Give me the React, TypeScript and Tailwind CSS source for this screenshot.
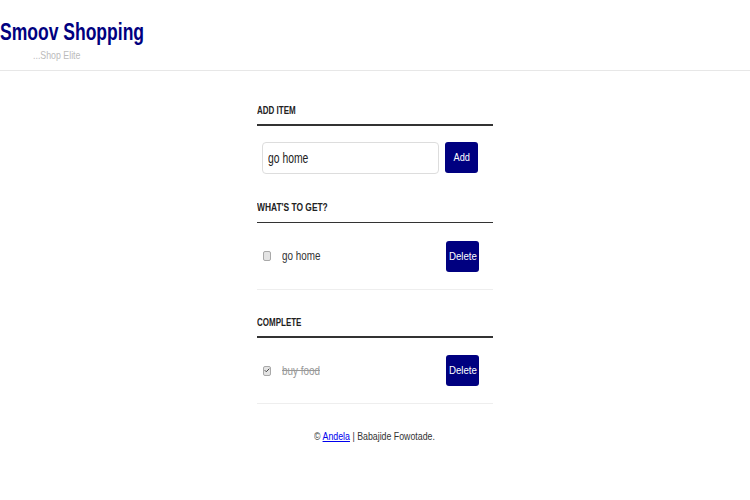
import { Check } from "lucide-react";
import type { ReactNode } from "react";

const font = { fontFamily: '"Liberation Sans", Arial, sans-serif' };

// the original renders a condensed helvetica, squeeze liberation to match
const N = ({ children, s = "scale-x-[0.8]", c = "origin-left" }: { children: ReactNode; s?: string; c?: string }) => (
  <span className={"inline-block whitespace-nowrap " + s + " " + c}>{children}</span>
);

const Box = ({ checked }: { checked?: boolean }) => (
  <span className="w-[8px] h-[10px] rounded-[2px] border border-[#a9a9a9] bg-[#e4e4e4] flex items-center justify-center">
    {checked && <Check size={7} strokeWidth={4} className="text-[#444]" />}
  </span>
);

const Row = ({ text, done, h }: { text: string; done?: boolean; h: string }) => (
  <div className={"flex items-center border-b border-[#eee] pl-[6px] pr-[14px] " + h}>
    <Box checked={done} />
    <span className={"ml-[11px] text-[13px] flex-1 " + (done ? "text-[#999]" : "text-[#333]")}>
      <N s={"scale-x-[0.76] " + (done ? "line-through" : "")}>{text}</N>
    </span>
    <button className="bg-[#000080] text-white text-[11px] rounded-[3px] w-[33px] h-[31px]">
      <N s="scale-x-[0.88]" c="origin-center">Delete</N>
    </button>
  </div>
);

export default function App() {
  return (
    <div className="w-[750px] h-[500px] bg-white text-[#333]" style={font}>
      <header className="h-[71px] border-b border-[#e7e7e7] pt-[17px]">
        <h1 className="text-[#000080] font-bold text-[24px] leading-[30px]">
          <N s="scale-x-[0.73]">Smoov Shopping</N>
        </h1>
        <p className="pl-[33px] text-[11px] text-[#bbb] leading-[14px] mt-[1px]">
          <N>...Shop Elite</N>
        </p>
      </header>

      <main className="w-[236px] mx-auto pt-[33px]">
        <h2 className="text-[10px] font-bold uppercase leading-[14px] text-[#222]">
          <N>Add Item</N>
        </h2>
        <div className="mt-[6px] border-t-2 border-[#333]" />
        <div className="flex items-start gap-[6px] pl-[5px] mt-[16px]">
          <div className="w-[177px] h-[32px] border border-[#ddd] rounded-[4px] px-[5px] text-[14px] text-[#222] flex items-center">
            <N s="scale-x-[0.74]">go home</N>
          </div>
          <button className="bg-[#000080] text-white text-[11px] rounded-[3px] w-[33px] h-[31px]">
            <N s="scale-x-[0.84]" c="origin-center">Add</N>
          </button>
        </div>

        <h2 className="text-[10px] font-bold uppercase leading-[14px] text-[#222] mt-[27px]">
          <N s="scale-x-[0.84]">What's to get?</N>
        </h2>
        <div className="mt-[7px] border-t border-[#333]" />
        <Row text="go home" h="h-[67px]" />

        <h2 className="text-[10px] font-bold uppercase leading-[14px] text-[#222] mt-[26px]">
          <N>Complete</N>
        </h2>
        <div className="mt-[6px] border-t-2 border-[#333]" />
        <Row text="buy food" done h="h-[66px]" />

        <p className="text-center text-[11px] text-[#333] mt-[24px]">
          <N c="origin-center">
            © <a className="text-[#00e] underline">Andela</a> | Babajide Fowotade.
          </N>
        </p>
      </main>
    </div>
  );
}
